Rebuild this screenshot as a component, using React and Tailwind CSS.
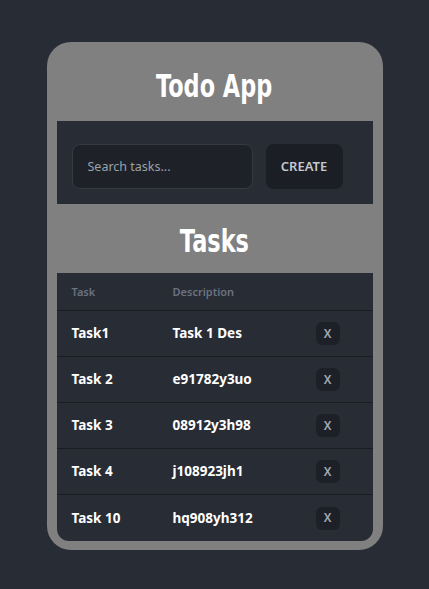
import React, { useState } from 'react';

const initialTasks = [
  { id: 1, name: 'Task1', description: 'Task 1 Des' },
  { id: 2, name: 'Task 2', description: 'e91782y3uo' },
  { id: 3, name: 'Task 3', description: '08912y3h98' },
  { id: 4, name: 'Task 4', description: 'j108923jh1' },
  { id: 5, name: 'Task 10', description: 'hq908yh312' },
];

// no Impact available, so squeeze a heavy sans to get the same condensed look
const headingFont = "inline-block scale-x-[0.7] font-['Impact','DejaVu_Sans',sans-serif] text-[32px] font-bold leading-none text-white";

export default function App() {
  const [tasks, setTasks] = useState(initialTasks);
  const [query, setQuery] = useState('');

  const removeTask = (id) => setTasks(prev => prev.filter(t => t.id !== id));

  return (
    <div className="min-h-screen bg-[#282c34] pt-[42px] font-['Noto_Sans',sans-serif]">
      <div className="mx-auto w-[336px] rounded-[24px] bg-[#808080] px-[10px] pb-[9px]">
        {/* Header */}
        <div className="flex h-[79px] items-center justify-center pt-[8px]">
          <h1 className={headingFont}>Todo App</h1>
        </div>

        {/* Search + create */}
        <div className="flex gap-[13px] bg-[#282c34] px-[15px] pt-[23px] pb-[15px]">
          <input
            value={query}
            onChange={(e) => setQuery(e.target.value)}
            placeholder="Search tasks..."
            className="h-[45px] w-[181px] rounded-lg border border-[#343944] bg-[#1e2128] px-[15px] text-[12.5px] text-white placeholder:text-[#9aa1ab] focus:outline-none"
          />
          <button className="h-[45px] w-[77px] rounded-lg bg-[#1b1e24] text-[13px] font-semibold text-[#c4c9d1]">
            CREATE
          </button>
        </div>

        {/* Tasks heading */}
        <div className="flex h-[69px] items-center justify-center pt-[4px]">
          <h2 className={headingFont}>Tasks</h2>
        </div>

        {/* Table */}
        <div className="overflow-hidden rounded-b-[12px] bg-[#282c34]">
          <div className="grid h-[38px] grid-cols-[101px_143px_1fr] items-center border-b border-[#1a1d22] pt-[2px] text-[11px] font-semibold text-[#6b7280]">
            <div className="pl-[15px]">Task</div>
            <div className="pl-[15px]">Description</div>
            <div />
          </div>
          {tasks.map((task, i) => (
            <div
              key={task.id}
              className={`grid h-[46px] grid-cols-[101px_143px_1fr] items-center text-[13.5px] font-bold text-white ${i < tasks.length - 1 ? 'border-b border-[#1a1d22]' : ''}`}
            >
              <div className="pl-[15px]">{task.name}</div>
              <div className="pl-[15px]">{task.description}</div>
              <div className="pl-[15px]">
                <button
                  onClick={() => removeTask(task.id)}
                  className="flex h-[23px] w-[24px] items-center justify-center rounded-md bg-[#1d2027] text-[12px] font-semibold text-[#a3a9b3]"
                >
                  X
                </button>
              </div>
            </div>
          ))}
        </div>
      </div>
    </div>
  );
}
